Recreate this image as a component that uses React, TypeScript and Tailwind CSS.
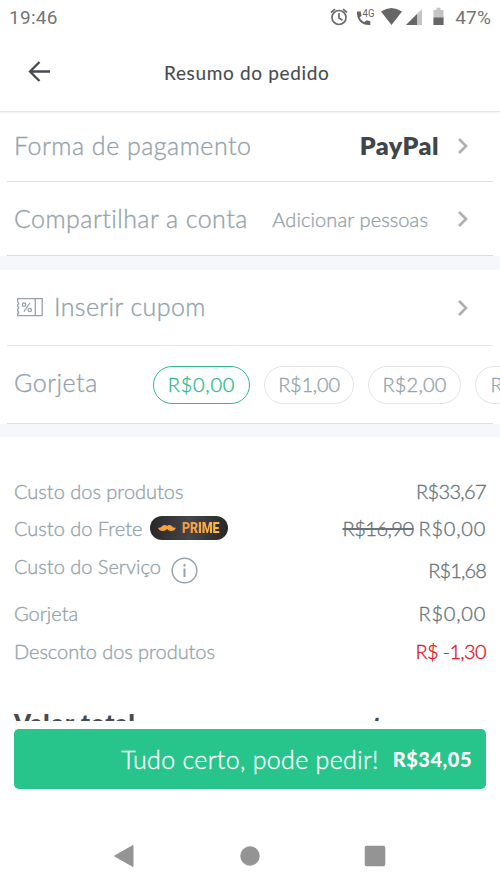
import type { ReactNode } from 'react';

function Chevron() {
  return (
    <svg className="h-4 w-[10px] shrink-0" viewBox="0 0 10 16" fill="none" stroke="#b0b0b0" strokeWidth="2.7">
      <path d="M1 1 8 8 1 15" />
    </svg>
  );
}

function StatusBar() {
  return (
    <div className="flex h-[35px] items-center px-[9px] font-['Roboto',sans-serif] text-[19px] font-normal text-[#757575] [-webkit-text-stroke:0px]">
      <span className="w-[320px] shrink-0 tracking-[0.3px]">19:46</span>
      <svg className="h-[35px] w-[120px] shrink-0" viewBox="329 0 120 35">
        <g fill="none" stroke="#6b6b6b" strokeWidth="1.7">
          <circle cx="339" cy="17.5" r="7" />
          <path d="M339 13v5l3.5 2.2M331 12.5l4-3.4M347 12.5l-4-3.4" />
        </g>
        <path d="M357 11.5h3.7l.9 4.2-2 1.8q1.5 3.2 4.7 4.8l2-2 4 .9v3.7q-6.3.6-10.3-3.5-3.4-3.7-3-9.9z" fill="#666" />
        <text x="362.5" y="16.5" fontSize="10.5" fontFamily="Roboto" fontWeight="400" textLength="12" lengthAdjust="spacingAndGlyphs" fill="#666">4G</text>
        <path d="M381 11.5q10.3-7 21 0L391.5 25z" fill="#666" />
        <path d="M406 25 422 9v16z" fill="#c4c4c4" />
        <path d="M406 25 417 14v11z" fill="#666" />
        <path d="M433.5 10h3V7.8h4V10h3v15h-10z" fill="#c4c4c4" />
        <path d="M433.5 17.5h10V25h-10z" fill="#666" />
      </svg>
      <span className="ml-auto tracking-[0.2px]">47%</span>
    </div>
  );
}

function Header() {
  return (
    <header className="relative z-10 flex h-[77px] items-center border-b border-[#e6e6e6] pb-px pl-[28px] shadow-[0_1px_2px_rgba(0,0,0,0.06)]">
      <svg className="-mt-px h-[22px] w-[23px]" viewBox="0 0 23 22" fill="none" stroke="#464b50" strokeWidth="2.3">
        <path d="M22 10.5H2M11.5 1 2 10.5 11.5 20" />
      </svg>
      <h1 className="-mt-px ml-[113px] text-[19px] font-normal tracking-[0.65px] text-[#464b50] [-webkit-text-stroke:0.1px]">Resumo do pedido</h1>
    </header>
  );
}

function Pill({ children, className }: { children: ReactNode; className: string }) {
  return (
    <button className={`flex h-[38px] shrink-0 items-center justify-center rounded-full border-[1.5px] pb-[2px] text-[20px] ${className}`}>
      {children}
    </button>
  );
}

function PrimeBadge() {
  return (
    <span className="ml-2 flex h-6 w-[78px] items-center rounded-full bg-linear-to-r from-[#28282b] via-[#464649] to-[#28282b] pl-2 [-webkit-text-stroke:0px]">
      <svg className="h-2 w-[18px]" viewBox="0 0 18 8">
        <path d="M0 3.5Q2.5 4.5 4.5 1.700 7 0 9 2 11 0 13.5 1.700 15.5 4.5 18 3.5 17 7 13 7 10.500 7 9 5 7.500 7 5 7 1 7 0 3.500z" fill="#f9a33c" />
      </svg>
      <span className="ml-[6px] origin-left scale-x-90 bg-linear-to-r from-[#f79440] to-[#fbbd45] bg-clip-text font-['Roboto',sans-serif] text-[14px] font-black leading-none tracking-[-0.2px] text-transparent">
        PRIME
      </span>
    </span>
  );
}

function InfoIcon() {
  return (
    <svg className="ml-[10px] h-[27px] w-[27px]" viewBox="0 0 27 27" fill="none" stroke="#94a3ac">
      <circle cx="13.5" cy="13.5" r="12.3" strokeWidth="1.5" />
      <path d="M13.5 11.5V20M13.5 7v2.5" strokeWidth="2" />
    </svg>
  );
}

export default function App() {
  return (
    <div className="flex h-[889px] w-[500px] flex-col overflow-hidden bg-white font-['Lato','Open_Sans',sans-serif] font-light leading-none text-[#94a3ac] [-webkit-text-stroke:0.35px]">
      <StatusBar />
      <Header />
      <main className="h-[609px] shrink-0 overflow-hidden whitespace-nowrap">
        <section>
          <div className="mx-[7px] flex h-[70px] items-center border-b-[1.5px] border-[#dedede] pb-[2px] pl-[7px] pr-[25px]">
            <span className="text-[25px] tracking-[0.5px]">Forma de pagamento</span>
            <span className="ml-auto mr-[19px] text-[25px] font-extrabold tracking-[0.5px] text-[#40454a] [-webkit-text-stroke:0px]">PayPal</span>
            <Chevron />
          </div>
          <div className="mx-[7px] flex h-[74px] items-center border-b-[1.5px] border-[#dedede] pl-[7px] pr-[25px]">
            <span className="text-[25px] tracking-[0.45px]">Compartilhar a conta</span>
            <span className="ml-auto mr-[30px] text-[20px] tracking-[0.1px]">Adicionar pessoas</span>
            <Chevron />
          </div>
        </section>
        <div className="h-[14px] bg-[#f5f8fb]" />
        <section>
          <div className="mx-[7px] flex h-[76px] items-center border-b border-[#e8e8e8] pl-[10px] pr-[25px]">
            <svg className="h-[19px] w-[26px]" viewBox="0 0 26 19" fill="none" stroke="#94a3ac" strokeWidth="1.3">
              <path d="M.7.7h24.5v17H.7v-2.2q2-.5 0-2.5v-2q2-.8 0-2.5V6.5q2-.8 0-2.5zM18.3.7v17" />
              <path d="M12.8 5 7 13.7" />
              <circle cx="7" cy="6.7" r="1.7" />
              <circle cx="12.8" cy="12" r="1.7" />
            </svg>
            <span className="-mt-[2px] ml-[11px] text-[25px] tracking-[0.4px]">Inserir cupom</span>
            <span className="ml-auto"><Chevron /></span>
          </div>
          <div className="ml-[7px] flex h-[77px] items-center overflow-hidden pl-[7px]">
            <span className="-mt-[4px] w-[139px] shrink-0 text-[25px] tracking-[0.5px]">Gorjeta</span>
            <div className="flex gap-[14px]">
              <Pill className="w-[97px] border-[#31b98a] tracking-[0.75px] text-[#31b98a]">R$0,00</Pill>
              <Pill className="w-[90px] border-[#e2e5e6] tracking-[-0.2px]">R$1,00</Pill>
              <Pill className="w-[93px] border-[#e2e5e6] tracking-[0.2px]">R$2,00</Pill>
              <Pill className="w-[94px] border-[#e2e5e6]">R$3,00</Pill>
            </div>
          </div>
          <div className="mx-[7px] h-px bg-[#e0e0e0]" />
        </section>
        <div className="h-[13px] bg-[#f5f8fb]" />
        <section className="px-[14px] pt-[35px] text-[20px]">
          <div className="flex h-[38px] items-center justify-between">
            <span>Custo dos produtos</span>
            <span className="tracking-[-0.65px] text-[#69747b]">R$33,67</span>
          </div>
          <div className="flex h-[36px] items-center">
            <span>Custo do Frete</span>
            <PrimeBadge />
            <span className="ml-auto text-[#69747b]"><s className="tracking-[-0.5px]">R$16,90</s><span className="ml-[5px] tracking-[0.75px]">R$0,00</span></span>
          </div>
          <div className="flex h-[48px] items-center">
            <span className="-mt-[8px]">Custo do Serviço</span>
            <InfoIcon />
            <span className="ml-auto tracking-[-0.85px] text-[#69747b]">R$1,68</span>
          </div>
          <div className="flex h-[38px] items-center justify-between">
            <span>Gorjeta</span>
            <span className="tracking-[0.75px] text-[#69747b]">R$0,00</span>
          </div>
          <div className="flex h-[37px] items-center justify-between">
            <span className="tracking-[-0.05px]">Desconto dos produtos</span>
            <span className="tracking-[-0.65px] text-[#e01525]">R$ -1,30</span>
          </div>
          <div className="mt-[42px] flex h-[28px] justify-between font-extrabold text-[#464b50] [-webkit-text-stroke:0px]">
            <span className="text-[24px] tracking-[0.8px]">Valor total</span>
            <span className="mr-[2px] mt-[5px] text-[34px] tracking-[2px]">R$34,05</span>
          </div>
        </section>
      </main>
      <div className="px-[14px] pt-2">
        <button className="flex h-[60px] w-full items-center justify-end rounded-[5px] bg-[#27c48b] pr-[14px] text-white">
          <span className="text-[25px] tracking-[0.3px]">Tudo certo, pode pedir!</span>
          <span className="ml-[14px] text-[20px] font-black tracking-[0.5px] [-webkit-text-stroke:0px]">R$34,05</span>
        </button>
      </div>
      <nav className="flex h-[100px] items-center justify-center pt-[33px]">
        <svg className="h-[24px] w-[274px]" viewBox="0 0 274 24" fill="#949494" stroke="#949494" strokeLinejoin="round">
          <path d="M1.5 12 20 1.5v21z" strokeWidth="1" />
          <circle cx="137" cy="12" r="9.5" strokeWidth="0.5" />
          <rect x="252.5" y="2.5" width="19" height="19" rx="1" strokeWidth="1.5" />
        </svg>
      </nav>
    </div>
  );
}
